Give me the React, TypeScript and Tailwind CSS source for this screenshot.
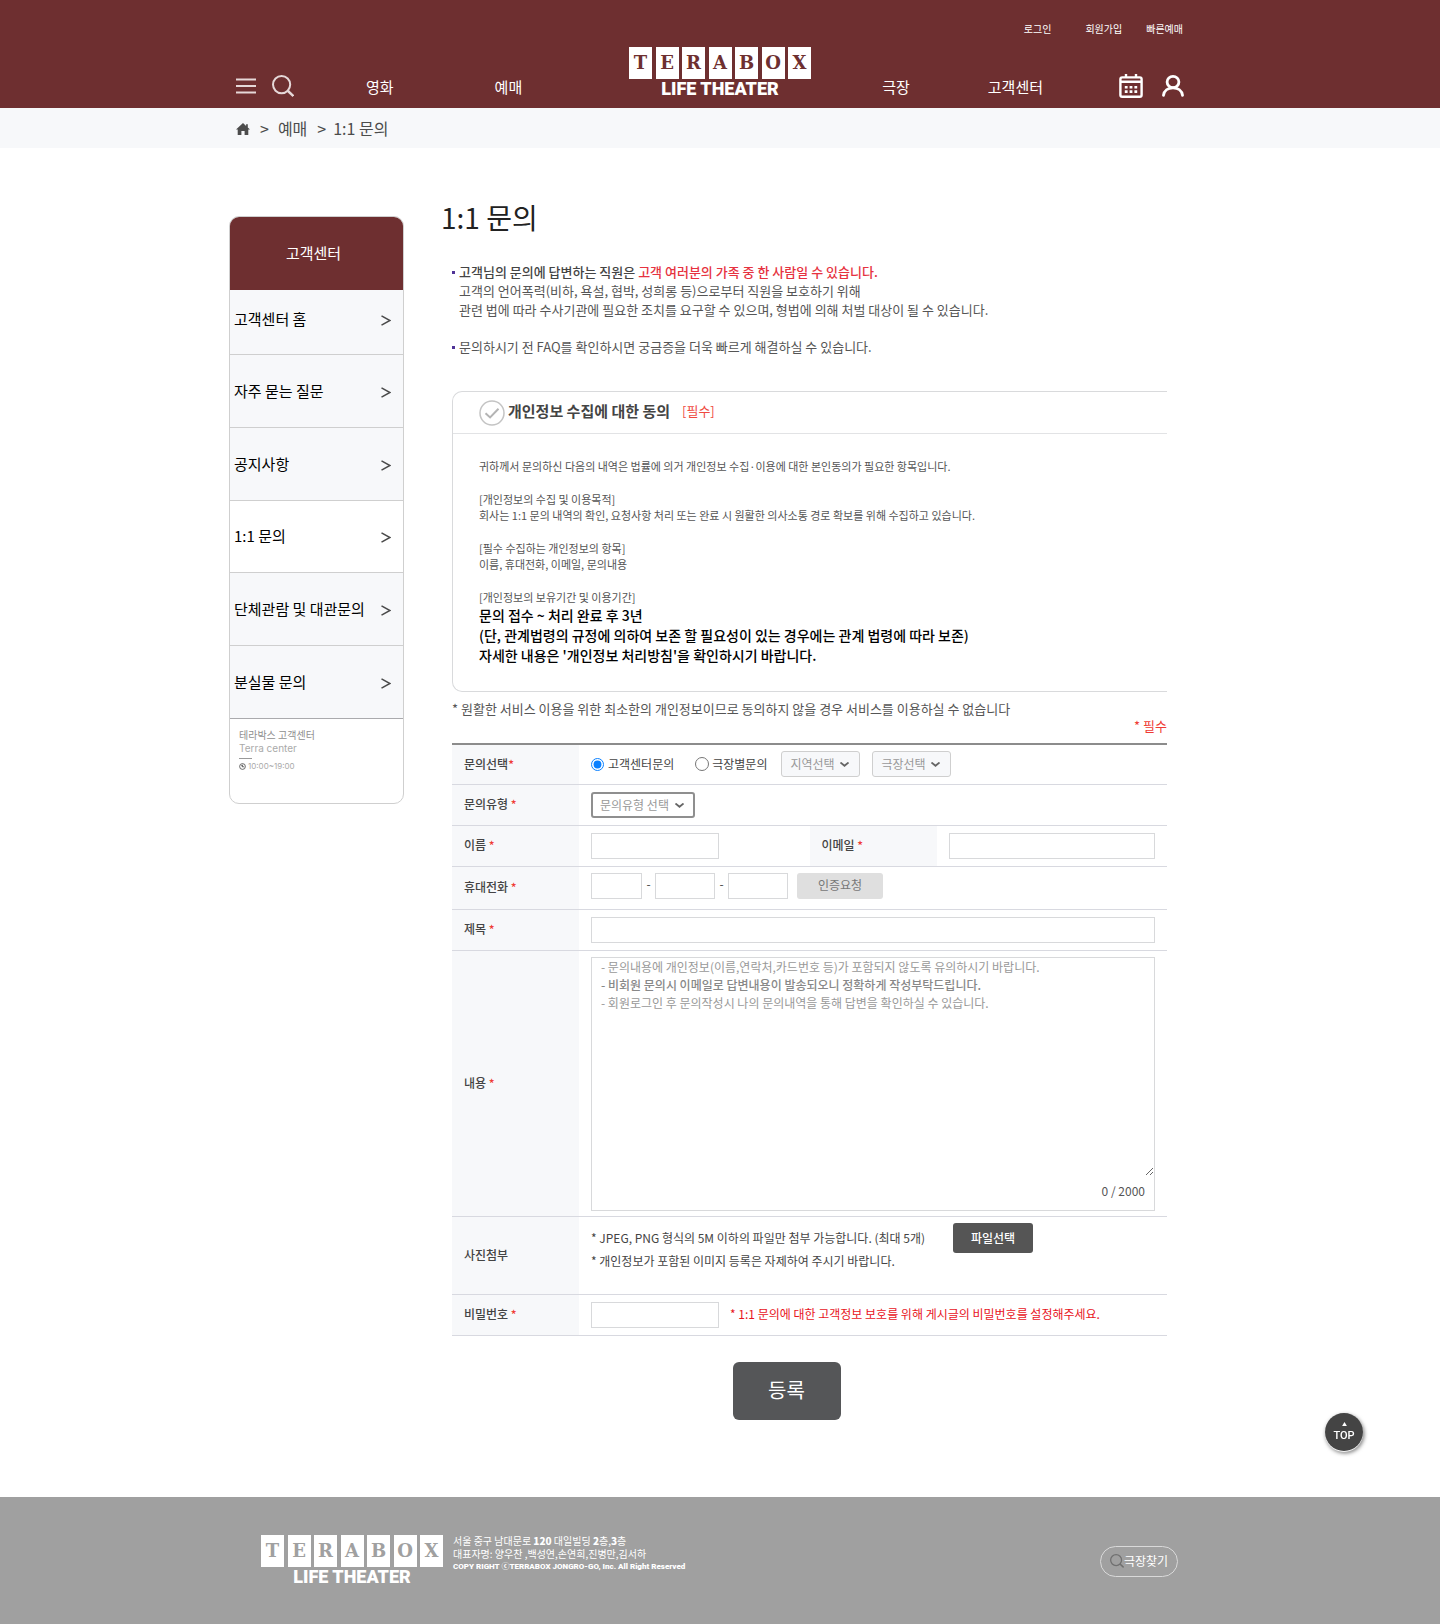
import { useState } from "react";
import type { ReactNode } from "react";

const LETTERS = ["T", "E", "R", "A", "B", "O", "X"];

function Logo({ tone }: { tone: string }) {
  return (
    <span className="flex w-[182px] flex-col items-center text-white" aria-label="TERABOX LIFE THEATER">
      <span className="flex w-full justify-between">
        {LETTERS.map((l) => (
          <span
            key={l}
            className={`flex h-8 w-[23px] items-center justify-center bg-white font-['DejaVu_Serif',serif] text-[18px] leading-8 font-bold ${tone}`}
          >
            {l}
          </span>
        ))}
      </span>
      <span className="font-['Roboto',sans-serif] text-[18px] leading-5 font-black whitespace-nowrap">LIFE THEATER</span>
    </span>
  );
}

function SearchIcon({ className }: { className: string }) {
  return (
    <svg viewBox="0 0 22 22" className={className} fill="none" stroke="currentColor" strokeWidth="2" aria-hidden="true">
      <circle cx="9.6" cy="9.6" r="8.6" />
      <path d="M16 16l5.4 5" strokeWidth="2.4" />
    </svg>
  );
}

function Header() {
  return (
    <header className="bg-[#6e2f30] text-white">
      <div className="mx-auto max-w-[982px]">
        <nav className="flex h-[47px] items-start justify-end pt-[21px] pr-7 text-[10px] leading-4">
          <a href="#login">로그인</a>
          <a href="#join" className="ml-[34px]">회원가입</a>
          <a href="#quick" className="ml-6">빠른예매</a>
        </nav>
        <div className="grid h-[61px] grid-cols-[1fr_auto_1fr]">
          <div className="flex items-center pt-4 pl-[7px]">
            <button type="button" aria-label="메뉴" className="text-[#e6d8d8]">
              <svg viewBox="0 0 20 16" className="h-4 w-5" stroke="currentColor" strokeWidth="2" aria-hidden="true">
                <path d="M0 1.5h20M0 8h20M0 14.5h20" />
              </svg>
            </button>
            <button type="button" aria-label="검색" className="ml-4 text-[#e6d8d8]">
              <SearchIcon className="size-[22px]" />
            </button>
            <a href="#movie" className="mt-[3px] ml-[72px] text-[15px] leading-5">영화</a>
            <a href="#booking" className="mt-[3px] ml-[101px] text-[15px] leading-5">예매</a>
          </div>
          <a href="#home">
            <Logo tone="text-[#6e2f30]" />
          </a>
          <div className="flex items-center justify-end pt-4 pr-[27px]">
            <a href="#theater" className="mt-[3px] text-[15px] leading-5">극장</a>
            <a href="#help" className="mt-[3px] ml-[78px] text-[15px] leading-5">고객센터</a>
            <button type="button" aria-label="상영시간표" className="ml-[76px]">
              <svg viewBox="0 0 24 24" className="size-6" fill="none" stroke="currentColor" strokeWidth="2.4" aria-hidden="true">
                <rect x="1.4" y="3.4" width="21.200" height="19.400" rx="1.800" />
                <path d="M7 0v4M17 0v4M1.500 7.800h21" />
                <path d="M5.800 13.200h2.800M10.600 13.200h2.800M15.400 13.200h2.800M5.800 17.600h2.800M10.600 17.600h2.800M15.400 17.600h2.800" strokeWidth="2.600" />
              </svg>
            </button>
            <button type="button" aria-label="나의 테라박스" className="ml-[19px]">
              <svg viewBox="0 0 22 22" className="size-[22px]" fill="none" stroke="currentColor" strokeWidth="2.800" strokeLinecap="round" aria-hidden="true">
                <ellipse cx="11" cy="7" rx="5.900" ry="5.600" />
                <path d="M1.500 20.300c.6-4.400 4.400-7.400 9.500-7.400s8.900 3 9.500 7.400" />
              </svg>
            </button>
          </div>
        </div>
      </div>
    </header>
  );
}

function Breadcrumb() {
  return (
    <div className="bg-[#f7f8fa]">
      <nav aria-label="위치" className="mx-auto flex h-10 max-w-[982px] items-center pb-px pl-[7px] text-base text-[#4c4c4c]">
        <a href="#home" aria-label="홈">
          <svg viewBox="0 0 14 12" className="mt-0.5 h-3 w-3.5" fill="currentColor" aria-hidden="true">
            <path d="M7 0L0 6.600h1.700V12h3.700V8h3.200v4h3.700V6.600H14L11.800 4.500V1.200h-1.700v1.700z" />
          </svg>
        </a>
        <span className="ml-[10px]">&gt;</span>
        <a href="#booking" className="ml-[9px]">예매</a>
        <span className="ml-[10px]">&gt;</span>
        <span className="ml-[7px]">1:1 문의</span>
      </nav>
    </div>
  );
}

const MENU = [
  { label: "고객센터 홈", cell: "h-[65px] bg-[#f7f8fa] pb-[6px]" },
  { label: "자주 묻는 질문", cell: "h-[73px] bg-[#f7f8fa]" },
  { label: "공지사항", cell: "h-[73px] bg-[#f7f8fa]" },
  { label: "1:1 문의", cell: "h-[72px] bg-white" },
  { label: "단체관람 및 대관문의", cell: "h-[73px] bg-[#f7f8fa]" },
  { label: "분실물 문의", cell: "h-[73px] bg-[#f7f8fa] border-b-[#aaaaad]" },
];

function Sidebar() {
  return (
    <aside className="mt-[68px] w-[175px] shrink-0 self-start overflow-hidden rounded-[10px] border border-[#cfcfcf]">
      <h2 className="-mx-px flex h-[73px] items-center justify-center bg-[#6e2f30] pr-[6px] pb-px text-[15px] text-white">고객센터</h2>
      <ul>
        {MENU.map((m) => (
          <li key={m.label}>
            <a href="#menu" className={`flex items-center justify-between border-b border-[#cfcfcf] pr-3 pl-1 text-[15px] text-black ${m.cell}`}>
              {m.label}
              <svg viewBox="0 0 10 11" className="mt-0.5 h-[11px] w-2.5" fill="none" stroke="#4a4a4a" strokeWidth="1.500" aria-hidden="true">
                <path d="M.5 .8L9 5.500.5 10.200" />
              </svg>
            </a>
          </li>
        ))}
      </ul>
      <div className="h-[84px] pt-[9px] pl-[9px] text-[10px] text-[#8f8f8f]">
        <p className="leading-[14px]">테라박스 고객센터</p>
        <p className="font-['Inter',sans-serif] leading-[13px] text-[#aaa]">Terra center</p>
        <div className="mt-[3px] w-[13px] border-t border-[#999]" />
        <p className="mt-0.5 flex items-center gap-0.5 font-['Inter',sans-serif] text-[8px] leading-[10px] text-[#aaa]">
          <svg viewBox="0 0 8 8" className="size-[7px]" fill="none" stroke="#555" strokeWidth="1" aria-hidden="true">
            <circle cx="4" cy="4" r="3.300" />
            <path d="M2.300 2.600L4 4.300V2M4 4.300h2" />
          </svg>
          10:00~19:00
        </p>
      </div>
    </aside>
  );
}

function Bullet() {
  return <span className="mt-[9px] mr-1 size-[3px] shrink-0 bg-[#503396]" />;
}

function Notice() {
  return (
    <ul className="mt-[25px] ml-3 text-[13px] leading-[19px] text-[#555]">
      <li className="flex">
        <Bullet />
        <p>
          <strong className="font-medium text-[#444]">고객님의 문의에 답변하는 직원은 </strong>
          <strong className="font-medium text-[#e63240]">고객 여러분의 가족 중 한 사람일 수 있습니다.</strong>
          <br />
          고객의 언어폭력(비하, 욕설, 협박, 성희롱 등)으로부터 직원을 보호하기 위해
          <br />
          관련 법에 따라 수사기관에 필요한 조치를 요구할 수 있으며, 형법에 의해 처벌 대상이 될 수 있습니다.
        </p>
      </li>
      <li className="mt-[18px] flex">
        <Bullet />
        <p>문의하시기 전 FAQ를 확인하시면 궁금증을 더욱 빠르게 해결하실 수 있습니다.</p>
      </li>
    </ul>
  );
}

function Consent() {
  return (
    <section className="mt-[35px] ml-3 rounded-l-[10px] border border-r-0 border-[#d9dadc]">
      <div className="flex h-[42px] items-center border-b border-[#e2e3e5] pb-[3px] pl-[26px]">
        <button type="button" aria-label="동의" className="mt-1">
          <svg viewBox="0 0 26 26" className="size-[26px]" fill="none" stroke="#c4c4c4" aria-hidden="true">
            <circle cx="13" cy="13" r="12" strokeWidth="1.500" />
            <path d="M6.500 13.200l4.600 4.200 8.400-8.600" stroke="#b4b4b4" strokeWidth="2" />
          </svg>
        </button>
        <h2 className="ml-[3px] text-[15px] leading-6 font-bold text-[#444]">개인정보 수집에 대한 동의</h2>
        <span className="ml-3 text-[13px] leading-6 text-[#ef4a3f]">[필수]</span>
      </div>
      <div className="pt-6 pr-4 pb-[26px] pl-[26px] text-[11px] leading-4 text-[#555]">
        <p>귀하께서 문의하신 다음의 내역은 법률에 의거 개인정보 수집·이용에 대한 본인동의가 필요한 항목입니다.</p>
        <p className="mt-[17px]">
          [개인정보의 수집 및 이용목적]
          <br />
          회사는 1:1 문의 내역의 확인, 요청사항 처리 또는 완료 시 원활한 의사소통 경로 확보를 위해 수집하고 있습니다.
        </p>
        <p className="mt-[17px]">
          [필수 수집하는 개인정보의 항목]
          <br />
          이름, 휴대전화, 이메일, 문의내용
        </p>
        <p className="mt-[17px]">[개인정보의 보유기간 및 이용기간]</p>
        <p className="text-[14px] leading-5 font-medium text-black">
          문의 접수 ~ 처리 완료 후 3년
          <br />
          (단, 관계법령의 규정에 의하여 보존 할 필요성이 있는 경우에는 관계 법령에 따라 보존)
          <br />
          자세한 내용은 '개인정보 처리방침'을 확인하시기 바랍니다.
        </p>
      </div>
    </section>
  );
}

function Th({ children, htmlFor, required }: { children: ReactNode; htmlFor?: string; required?: boolean }) {
  return (
    <th scope="row" className="bg-[#f7f8fa] pb-0.5 pl-3 text-left text-[12px] font-medium text-[#444]">
      <label htmlFor={htmlFor}>
        {children}
        {required && <span className="text-[#ef3b34]"> *</span>}
      </label>
    </th>
  );
}

const FIELD = "h-[26px] border border-[#d8d9db] bg-white px-2 text-[12px] outline-none";

function Select({ label, box, name }: { label: string; box: string; name: string }) {
  return (
    <span className="relative inline-flex">
      <select
        id={name}
        aria-label={label}
        className={`h-[26px] appearance-none rounded-[3px] text-[12px] leading-4 text-[#999] ${box}`}
      >
        <option>{label}</option>
      </select>
      <svg viewBox="0 0 9 5" className="pointer-events-none absolute top-[11px] right-[11px] h-[5px] w-[9px]" fill="none" stroke="#666" strokeWidth="1.800" aria-hidden="true">
        <path d="M.5 .5L4.500 3.800 8.500 .5" />
      </svg>
    </span>
  );
}

function InquiryForm() {
  const [body, setBody] = useState("");
  const row = "border-b border-[#d8d9e0]";
  return (
    <form onSubmit={(e) => e.preventDefault()}>
      <table className="mt-[9px] ml-3 w-[calc(100%-12px)] table-fixed border-collapse border-t-2 border-[#8c8c8c] text-[12px] text-[#444]">
        <colgroup>
          <col className="w-[127px]" />
          <col />
          <col className="w-[127px]" />
          <col />
        </colgroup>
        <tbody>
          <tr className={row}>
            <th scope="row" className="bg-[#f7f8fa] pb-0.5 pl-3 text-left text-[12px] font-medium text-[#444]">
              문의선택<span className="text-[#ef3b34]">*</span>
            </th>
            <td colSpan={3} className="px-3 pt-[6px] pb-[7px]">
              <div className="flex items-center">
                <label className="flex items-center gap-1">
                  <input type="radio" name="kind" defaultChecked className="size-[13px] accent-[#0a80ff]" />
                  고객센터문의
                </label>
                <label className="ml-[21px] flex items-center gap-[3px]">
                  <input type="radio" name="kind" className="size-[14px]" />
                  극장별문의
                </label>
                <span className="ml-[14px] flex gap-3">
                  <Select name="region" label="지역선택" box="w-[79px] border border-[#cfcfcf] bg-[#f7f8fa] pl-2" />
                  <Select name="branch" label="극장선택" box="w-[79px] border border-[#cfcfcf] bg-[#f7f8fa] pl-2" />
                </span>
              </div>
            </td>
          </tr>
          <tr className={row}>
            <Th htmlFor="type" required>문의유형</Th>
            <td colSpan={3} className="px-3 py-[7px]">
              <div className="flex">
                <Select name="type" label="문의유형 선택" box="w-[104px] border-2 border-[#8f8f8f] bg-white pl-[7px]" />
              </div>
            </td>
          </tr>
          <tr className={row}>
            <Th htmlFor="name" required>이름</Th>
            <td className="px-3 py-[7px]">
              <input id="name" className={`block w-[128px] ${FIELD}`} />
            </td>
            <Th htmlFor="email" required>이메일</Th>
            <td className="px-3 py-[7px]">
              <input id="email" type="email" className={`block w-full ${FIELD}`} />
            </td>
          </tr>
          <tr className={row}>
            <Th htmlFor="tel1" required>휴대전화</Th>
            <td colSpan={3} className="px-3 pt-[6px] pb-[10px]">
              <div className="flex items-center">
                <input id="tel1" className={`w-[51px] ${FIELD}`} />
                <span className="w-[13px] pb-1 text-center">-</span>
                <input aria-label="휴대전화 가운데 자리" className={`w-[60px] ${FIELD}`} />
                <span className="w-[13px] pb-1 text-center">-</span>
                <input aria-label="휴대전화 끝 자리" className={`w-[60px] ${FIELD}`} />
                <button type="button" className="ml-[9px] h-[26px] w-[86px] rounded-[3px] bg-[#dfdfdf] pb-0.5 text-[12px] text-[#777]">인증요청</button>
              </div>
            </td>
          </tr>
          <tr className={row}>
            <Th htmlFor="subject" required>제목</Th>
            <td colSpan={3} className="px-3 py-[7px]">
              <input id="subject" className={`block w-full ${FIELD}`} />
            </td>
          </tr>
          <tr className={row}>
            <Th htmlFor="body" required>내용</Th>
            <td colSpan={3} className="px-3 pt-[6px] pb-[5px]">
              <div className="relative border border-[#d8d9db]">
                <textarea
                  id="body"
                  maxLength={2000}
                  value={body}
                  onChange={(e) => setBody(e.target.value)}
                  className="block h-[218px] w-full resize bg-transparent px-[9px] py-0 text-[12px] leading-[18px] outline-none"
                />
                {body === "" && (
                  <div className="pointer-events-none absolute top-0 left-[9px] text-[12px] leading-[18px] text-[#999]">
                    <p>- 문의내용에 개인정보(이름,연락처,카드번호 등)가 포함되지 않도록 유의하시기 바랍니다.</p>
                    <p className="font-medium text-[#888]">- 비회원 문의시 이메일로 답변내용이 발송되오니 정확하게 작성부탁드립니다.</p>
                    <p>- 회원로그인 후 문의작성시 나의 문의내역을 통해 답변을 확인하실 수 있습니다.</p>
                  </div>
                )}
                <p className="h-[34px] pt-[7px] pr-[9px] text-right text-[12px] leading-4 text-[#555]">{body.length} / 2000</p>
              </div>
            </td>
          </tr>
          <tr className={row}>
            <Th>사진첨부</Th>
            <td colSpan={3} className="px-3 pt-[6px] pb-[25px]">
              <div className="flex items-center gap-7">
                <p>* JPEG, PNG 형식의 5M 이하의 파일만 첨부 가능합니다. (최대 5개)</p>
                <button type="button" className="h-[30px] w-20 rounded-[3px] bg-[#555] text-[12px] font-medium text-white">파일선택</button>
              </div>
              <p className="leading-4">* 개인정보가 포함된 이미지 등록은 자제하여 주시기 바랍니다.</p>
            </td>
          </tr>
          <tr className={row}>
            <Th htmlFor="pw" required>비밀번호</Th>
            <td colSpan={3} className="px-3 py-[7px]">
              <div className="flex items-center gap-[11px]">
                <input id="pw" type="password" className={`w-[128px] ${FIELD}`} />
                <span className="pb-0.5 text-[#e8141c]">* 1:1 문의에 대한 고객정보 보호를 위해 게시글의 비밀번호를 설정해주세요.</span>
              </div>
            </td>
          </tr>
        </tbody>
      </table>
      <div className="flex justify-center pt-[26px] pr-[34px] pb-[77px]">
        <button type="submit" className="h-[58px] w-[108px] rounded-[6px] bg-[#555658] pb-0.5 text-[20px] text-white">등록</button>
      </div>
    </form>
  );
}

function Footer() {
  return (
    <footer className="bg-[#a0a0a0] text-white">
      <div className="mx-auto flex h-32 max-w-[982px] items-start pr-[33px] pl-8">
        <a href="#home" className="mt-[38px]">
          <Logo tone="text-[#a0a0a0]" />
        </a>
        <address className="mt-[37px] ml-[10px] text-[10px] leading-[13px] whitespace-nowrap not-italic">
          <p>서울 중구 남대문로 <b className="font-black">120</b> 대일빌딩 <b className="font-black">2</b>층,<b className="font-black">3</b>층</p>
          <p>대표자명: 양우찬 ,백성연,손연희,진병만,김서하</p>
          <p className="font-['Roboto','Noto_Sans_CJK_KR',sans-serif] text-[8px] font-black">COPY RIGHT ⓒTERRABOX JONGRO-GO, Inc. All Right Reserved</p>
        </address>
        <a href="#find" className="mt-[49px] ml-auto flex h-[31px] w-[78px] items-center justify-center rounded-full border border-[#d9d9d9] pb-px text-[12px]">
          <SearchIcon className="size-[14px] text-[#707070]" />
          극장찾기
        </a>
      </div>
    </footer>
  );
}

export default function App() {
  return (
    <div className="min-h-screen bg-white font-['Noto_Sans_CJK_KR',sans-serif]">
      <Header />
      <Breadcrumb />
      <div className="mx-auto flex max-w-[982px]">
        <Sidebar />
        <main className="mr-[44px] ml-9 min-w-0 flex-1 pt-[49px]">
          <h1 className="pl-px text-[28px] leading-10 text-[#222]">1:1 문의</h1>
          <Notice />
          <Consent />
          <p className="mt-2 ml-3 text-[13px] leading-[18px] text-[#555]">
            * 원활한 서비스 이용을 위한 최소한의 개인정보이므로 동의하지 않을 경우 서비스를 이용하실 수 없습니다
          </p>
          <p className="text-right text-[13px] leading-4 text-[#ef3b34]">* 필수</p>
          <InquiryForm />
        </main>
      </div>
      <Footer />
      <a
        href="#top"
        className="fixed right-[77px] bottom-[173px] flex size-[38px] flex-col items-center justify-center rounded-full bg-[#444] text-white shadow-[0_1px_1px_#fff,1px_2px_4px_rgba(0,0,0,0.6)]"
      >
        <svg viewBox="0 0 6 5" className="h-1 w-[5px]" fill="currentColor" aria-hidden="true">
          <path d="M3 0l3 5H0z" />
        </svg>
        <span className="mt-1 font-['Roboto',sans-serif] text-[11px] leading-3 font-medium">TOP</span>
      </a>
    </div>
  );
}
